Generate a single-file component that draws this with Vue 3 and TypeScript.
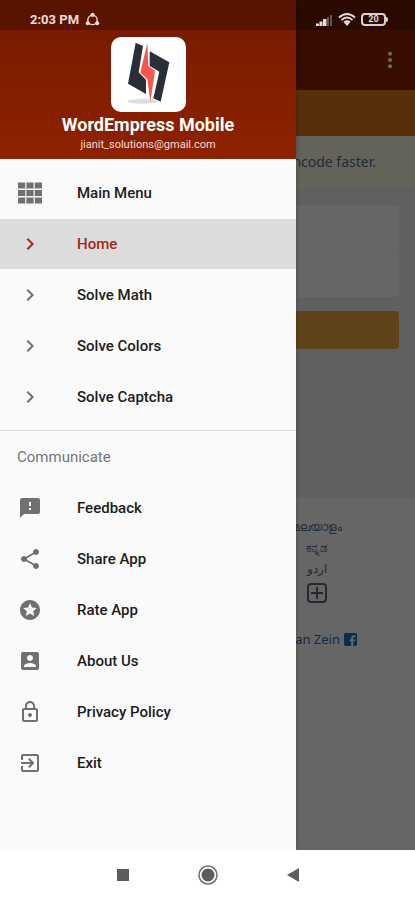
<script setup lang="ts">
import { ref } from 'vue'

interface Entry {
  label: string
  icon: string
}

const chevron = 'M10 6 8.600 7.400 13.200 12l-4.600 4.600L10 18l6-6z'

const mainEntries: Entry[] = [
  {
    label: 'Main Menu',
    icon: 'M0 1.500h7.200v6H0zM8.400 1.500h7.200v6H8.400zM16.800 1.500H24v6h-7.200zM0 9h7.200v6H0zM8.400 9h7.200v6H8.400zM16.800 9H24v6h-7.200zM0 16.500h7.200v6H0zM8.400 16.500h7.200v6H8.400zM16.800 16.500H24v6h-7.200z',
  },
  { label: 'Home', icon: chevron },
  { label: 'Solve Math', icon: chevron },
  { label: 'Solve Colors', icon: chevron },
  { label: 'Solve Captcha', icon: chevron },
]

const communicateEntries: Entry[] = [
  {
    label: 'Feedback',
    icon: 'M20 2H4c-1.100 0-2 .9-2 2v18l4-4h14c1.100 0 2-.9 2-2V4c0-1.100-.9-2-2-2zm-7 12h-2v-2h2v2zm0-4h-2V6h2v4z',
  },
  {
    label: 'Share App',
    icon: 'M18 16.080c-.76 0-1.440.3-1.960.77L8.910 12.700c.05-.23.09-.46.09-.7s-.04-.47-.09-.7l7.050-4.110c.54.5 1.250.81 2.040.81 1.660 0 3-1.340 3-3s-1.340-3-3-3-3 1.340-3 3c0 .24.04.47.09.7L8.040 9.810C7.500 9.310 6.790 9 6 9c-1.660 0-3 1.340-3 3s1.340 3 3 3c.79 0 1.500-.31 2.040-.81l7.120 4.160c-.05.21-.08.43-.08.65 0 1.610 1.310 2.920 2.920 2.920s2.920-1.310 2.920-2.920-1.310-2.920-2.920-2.920z',
  },
  {
    label: 'Rate App',
    icon: 'M11.990 2C6.470 2 2 6.480 2 12s4.470 10 9.990 10C17.520 22 22 17.520 22 12S17.520 2 11.990 2zm4.240 16L12 15.450 7.770 18l1.120-4.810-3.730-3.230 4.920-.42L12 5l1.920 4.530 4.920.42-3.730 3.230L16.230 18z',
  },
  {
    label: 'About Us',
    icon: 'M3 5v14c0 1.100.89 2 2 2h14c1.100 0 2-.9 2-2V5c0-1.100-.9-2-2-2H5c-1.110 0-2 .9-2 2zm12 4c0 1.660-1.340 3-3 3s-3-1.340-3-3 1.340-3 3-3 3 1.340 3 3zm-9 8c0-2 4-3.100 6-3.100s6 1.100 6 3.100v1H6v-1z',
  },
  {
    label: 'Privacy Policy',
    icon: 'M12 17c1.100 0 2-.9 2-2s-.9-2-2-2-2 .9-2 2 .9 2 2 2zm6-9h-1V6c0-2.760-2.240-5-5-5S7 3.240 7 6v2H6c-1.100 0-2 .9-2 2v10c0 1.100.9 2 2 2h12c1.100 0 2-.9 2-2V10c0-1.100-.9-2-2-2zM8.900 6c0-1.710 1.390-3.100 3.100-3.100s3.100 1.390 3.100 3.100v2H8.900V6zM18 20H6V10h12v10z',
  },
  {
    label: 'Exit',
    icon: 'M10.090 15.590 11.500 17l5-5-5-5-1.410 1.410L12.670 11H3v2h9.670l-2.580 2.590zM19 3H5c-1.110 0-2 .9-2 2v4h2V5h14v14H5v-4H3v4c0 1.100.89 2 2 2h14c1.100 0 2-.9 2-2V5c0-1.100-.9-2-2-2z',
  },
]

const active = ref('Home')
</script>

<template>
  <div class="phone">
    <div class="screen">
      <div class="page">
        <header class="toolbar">
          <button class="more" type="button" aria-label="More options">
            <svg viewBox="0 0 24 24"><circle cx="12" cy="4.500" r="2.500" /><circle cx="12" cy="12" r="2.500" /><circle cx="12" cy="19.500" r="2.500" /></svg>
          </button>
        </header>
        <div class="banner"></div>
        <p class="notice">encode faster.</p>
        <main class="form-area">
          <div class="card"><div class="field"></div><div class="field"></div></div>
          <button class="submit" type="button" aria-label="Log in"></button>
        </main>
        <footer class="foot">
          <div class="languages">
            <a href="#">മലയാളം</a>
            <a href="#">ಕನ್ನಡ</a>
            <a href="#">اردو</a>
            <button class="plus" type="button" aria-label="More languages">
              <svg viewBox="0 0 20 20"><rect x="1" y="1" width="18" height="18" rx="3" /><path d="M10 4v12M4 10h12" /></svg>
            </button>
          </div>
          <a class="credit" href="#">
            <span>ian Zein</span>
            <svg viewBox="0 0 14 14"><path fill-rule="evenodd" d="M2 0h10a2 2 0 0 1 2 2v10a2 2 0 0 1-2 2h-2V9h2l.4-2H10V5.500q0-1 1-1h1.400v-2H10.300Q7.700 2.500 7.700 5v2H6v2h1.700v5H2a2 2 0 0 1-2-2V2a2 2 0 0 1 2-2z" /></svg>
          </a>
        </footer>
      </div>
      <div class="scrim"></div>

      <aside class="drawer">
        <div class="profile">
          <div class="logo">
            <svg viewBox="0 0 225 225">
              <ellipse cx="94" cy="193" rx="45" ry="7" fill="#dcdcde" />
              <path d="M74 17 96 27 83 106 105 128 105 171 51 140z" fill="#292e38" />
              <path d="M116 43 175 76 149 194 127 184 145 104 116 87z" fill="#292e38" />
              <path d="M109 17 112 87 132 101 118 195 109 127 88 107z" fill="#f4574f" />
            </svg>
          </div>
          <h1>WordEmpress Mobile</h1>
          <p>jianit_solutions@gmail.com</p>
        </div>
        <nav class="menu">
          <button
            v-for="entry in mainEntries"
            :key="entry.label"
            type="button"
            class="item"
            :class="{ active: active === entry.label }"
            @click="active = entry.label"
          >
            <svg viewBox="0 0 24 24"><path :d="entry.icon" /></svg>
            <span>{{ entry.label }}</span>
          </button>
        </nav>
        <h2>Communicate</h2>
        <nav class="menu second">
          <button
            v-for="entry in communicateEntries"
            :key="entry.label"
            type="button"
            class="item"
            :class="{ active: active === entry.label }"
            @click="active = entry.label"
          >
            <svg viewBox="0 0 24 24"><path :d="entry.icon" /></svg>
            <span>{{ entry.label }}</span>
          </button>
        </nav>
      </aside>

      <div class="status">
        <span>2:03 PM</span>
        <svg class="ring" viewBox="0 0 16 16"><circle cx="8" cy="8.500" r="5" /><circle class="dot" cx="8" cy="3" r="2.200" /><circle class="dot" cx="3" cy="12" r="2.200" /><circle class="dot" cx="13" cy="12" r="2.200" /></svg>
        <svg class="signal" viewBox="0 0 16 12"><path d="M0 9.500h3V12H0zM3.500 7.500h3V12h-3zM7 5h3.500v7H7z" /><path class="dim" d="M11 3h2v9h-2zM14 1h2v11h-2z" /></svg>
        <svg class="wifi" viewBox="0 0 18 13"><path d="M1 4.500Q9-2.500 17 4.500M3.500 7Q9 2 14.500 7M6 9.500Q9 7 12 9.500" /><path class="tip" d="M6.500 10 9 13l2.500-3Q9 8 6.500 10z" /></svg>
        <div class="battery"><span>20</span></div>
      </div>
    </div>

    <div class="navbar">
      <button type="button" aria-label="Recent apps"><svg viewBox="0 0 20 20"><path d="M4 4h12v12H4z" /></svg></button>
      <button type="button" aria-label="Home screen"><svg viewBox="0 0 20 20"><circle class="outline" cx="10" cy="10" r="9" /><circle cx="10" cy="10" r="6.500" /></svg></button>
      <button type="button" aria-label="Back"><svg viewBox="0 0 20 20"><path d="M4 10 16 3v14z" /></svg></button>
    </div>
  </div>
</template>

<style>
body {
  margin: 0;
}
</style>

<style scoped>
.phone {
  display: flex;
  flex-direction: column;
  min-height: 100vh;
  font-family: Roboto, "Noto Sans", sans-serif;
  background: #fff;
}
button {
  border: 0;
  padding: 0;
  background: none;
  font: inherit;
  color: inherit;
}
h1, h2, p {
  margin: 0;
}
svg {
  display: block;
  flex: none;
}
.screen {
  position: relative;
  flex: 1;
  display: flex;
  overflow: hidden;
}
.page {
  flex: 1;
  display: flex;
  flex-direction: column;
  background: #fff;
}
.toolbar {
  display: flex;
  justify-content: flex-end;
  align-items: center;
  height: 60px;
  padding: 30px 14px 0 0;
  background: #8e1e00;
}
.more svg {
  width: 22px;
  height: 20px;
  fill: #fff;
}
.banner {
  height: 46px;
  background: #dc7619;
}
.notice {
  padding: 0 39px 0 0;
  background: #fbf8e0;
  color: #576b95;
  font: 14px/51px "Noto Sans", sans-serif;
  text-align: right;
}
.form-area {
  display: flex;
  flex-direction: column;
  gap: 14px;
  height: 310px;
  padding: 18px 16px 0;
  box-sizing: border-box;
  background: #eceff5;
}
.card {
  border-radius: 4px;
  background: #fff;
}
.field {
  height: 46px;
  box-sizing: border-box;
}
.field + .field {
  border-top: 1px solid #f4f4f6;
}
.submit {
  height: 38px;
  border-radius: 4px;
  background: #eba83e;
}
.foot {
  display: flex;
  flex-direction: column;
  align-items: flex-end;
  gap: 26px;
  flex: 1;
  padding-top: 18px;
  border-top: 1px solid #f4f4f4;
}
.languages {
  display: flex;
  flex-direction: column;
  align-items: center;
  width: 196px;
  font: 12px/21px "Noto Sans", sans-serif;
}
.languages a {
  color: #576b95;
  text-decoration: none;
}
.plus {
  margin-top: 4px;
}
.plus svg {
  width: 20px;
  height: 20px;
  fill: none;
  stroke: #5b6480;
  stroke-width: 2;
}
.credit {
  display: flex;
  align-items: center;
  gap: 4px;
  padding-right: 58px;
  color: #1a6fae;
  font: 13px/20px "Noto Sans", sans-serif;
  text-decoration: none;
}
.credit svg {
  width: 13px;
  height: 13px;
  fill: currentColor;
}
.scrim {
  position: absolute;
  inset: 0;
  background: rgba(0, 0, 0, 0.6);
}
.drawer {
  position: absolute;
  top: 0;
  bottom: 0;
  left: 0;
  width: 296px;
  background: #fafafa;
  box-shadow: 0 0 4px rgba(0, 0, 0, 0.3);
}
.profile {
  display: flex;
  flex-direction: column;
  align-items: center;
  height: 159px;
  padding-top: 37px;
  box-sizing: border-box;
  background: linear-gradient(#741a00, #8e2200);
  color: #fff;
}
.logo {
  width: 75px;
  height: 75px;
  border-radius: 10px;
  background: #fff;
  overflow: hidden;
}
h1 {
  font-size: 18px;
  line-height: 26px;
  font-weight: 700;
}
.profile p {
  font-size: 11px;
  line-height: 14px;
  color: #f5dcd4;
}
.menu {
  display: flex;
  flex-direction: column;
  gap: 1px;
  padding: 9px 0 8px;
  border-bottom: 1px solid #dcdcdc;
}
.menu.second {
  padding-top: 0;
  border-bottom: 0;
}
.item {
  display: flex;
  align-items: center;
  gap: 35px;
  height: 50px;
  padding: 0 18px;
  color: #1c1c1c;
  font-size: 15px;
  font-weight: 500;
  text-align: left;
}
.item svg {
  width: 24px;
  height: 24px;
  fill: #707070;
}
.item.active {
  background: #dcdcdc;
  color: #9c2a14;
}
.item.active svg {
  fill: #9c2a14;
}
h2 {
  padding: 1px 17px 0;
  color: #757575;
  font-size: 15px;
  line-height: 51px;
  font-weight: 400;
}
.status {
  position: absolute;
  top: 0;
  left: 0;
  right: 0;
  display: flex;
  align-items: center;
  height: 30px;
  padding: 9px 29px 0 30px;
  box-sizing: border-box;
  background: rgba(0, 0, 0, 0.25);
  color: #f0dcd4;
  font-size: 13px;
  font-weight: 700;
}
.status svg {
  fill: #e4dcd8;
}
.status .ring {
  width: 15px;
  height: 15px;
  margin-left: 6px;
  fill: none;
  stroke: #f0dcd4;
  stroke-width: 1.500;
}
.ring .dot {
  fill: #f0dcd4;
  stroke: none;
}
.signal {
  width: 16px;
  height: 12px;
  margin-left: auto;
}
.signal .dim {
  opacity: 0.35;
}
.status .wifi {
  width: 18px;
  height: 13px;
  margin: 0 5px 0 6px;
  fill: none;
  stroke: #e4dcd8;
  stroke-width: 1.800;
}
.wifi .tip {
  fill: #e4dcd8;
  stroke: none;
}
.battery {
  position: relative;
  width: 25px;
  height: 13px;
  box-sizing: border-box;
  border: 2px solid #d8d0cc;
  border-radius: 4px;
  color: #e4dcd8;
  font-size: 9px;
  line-height: 9px;
  text-align: center;
}
.battery::after {
  content: "";
  position: absolute;
  top: 2px;
  right: -4px;
  width: 2px;
  height: 5px;
  background: #d8d0cc;
  border-radius: 0 2px 2px 0;
}
.navbar {
  display: flex;
  align-items: center;
  justify-content: center;
  gap: 65px;
  height: 50px;
  background: #fff;
}
.navbar svg {
  width: 20px;
  height: 20px;
  fill: #5c5c5c;
}
.navbar .outline {
  fill: none;
  stroke: #6c6c6c;
  stroke-width: 1.500;
}
</style>
